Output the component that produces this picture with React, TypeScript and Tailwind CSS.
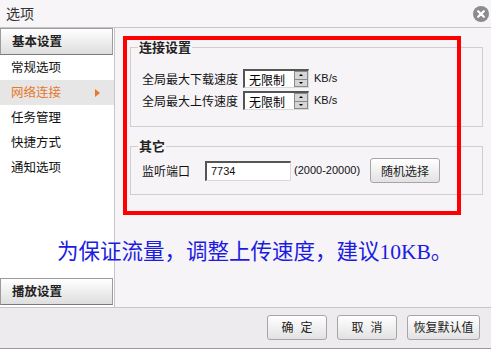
import React from 'react';

const cjk = { fontFamily: '"Noto Sans CJK SC", "Liberation Sans", sans-serif' };
const latin = { fontFamily: '"Liberation Sans", sans-serif' };

const SideItem: React.FC<{ label: string; active?: boolean }> = ({ label, active }) => (
  <div
    className={`h-[25px] flex items-center justify-between pl-[11px] pr-[14px] text-[12.5px] ${
      active ? 'bg-[#e6e6e6] text-[#e8772b]' : 'text-[#111]'
    }`}
  >
    <span>{label}</span>
    {active && (
      <span className="w-0 h-0 border-y-[4px] border-y-transparent border-l-[5px] border-l-[#e8772b]" />
    )}
  </div>
);

const SideHeader: React.FC<{ label: string }> = ({ label }) => (
  <div className="h-[27px] mr-[1px] flex items-center pl-[11px] text-[12.5px] font-bold text-[#222] border border-[#9c9c9c] border-b-[#7a7a7a] bg-gradient-to-b from-[#ffffff] to-[#dedede]">
    {label}
  </div>
);

const SpinBox: React.FC = () => (
  <div className="flex h-[19px] w-[66px] border-t-2 border-l-2 border-[#555] border-b border-r border-b-[#d8d8d8] border-r-[#d8d8d8] bg-white">
    <div className="flex-1 pl-[4px] text-[12px] leading-[17px] text-black">无限制</div>
    <div className="w-[14px] flex flex-col border border-[#8a8a8a] bg-[#d6d6d6]">
      <div className="flex-1 flex items-center justify-center border-b border-[#8a8a8a]">
        <span className="w-0 h-0 border-x-[2px] border-x-transparent border-b-[2px] border-b-black" />
      </div>
      <div className="flex-1 flex items-center justify-center">
        <span className="w-0 h-0 border-x-[2px] border-x-transparent border-t-[2px] border-t-black" />
      </div>
    </div>
  </div>
);

const Btn: React.FC<{ label: string[]; w: string }> = ({ label, w }) => (
  <div
    className={`${w} h-[25px] flex items-center justify-center gap-[7px] rounded-[3px] border border-[#a6a6a6] bg-gradient-to-b from-[#ffffff] to-[#e2e2e2] text-[12px] text-[#222]`}
  >
    {label.map((t) => (
      <span key={t}>{t}</span>
    ))}
  </div>
);

export default function App() {
  return (
    <div className="relative w-[491px] h-[349px] flex flex-col bg-[#f6f4f7] overflow-hidden" style={cjk}>
      {/* title bar */}
      <div className="h-[28px] flex items-center justify-between pl-[6px] pr-[2px] border-b border-[#c6c6c6] bg-[#f7f5f8]">
        <span className="text-[14px] text-[#333]">选项</span>
        <div className="w-[16px] h-[16px] rounded-full bg-[#8c8c8c] flex items-center justify-center">
          <svg width="8" height="8" viewBox="0 0 8 8">
            <path d="M1.2 1.2L6.8 6.8M6.8 1.2L1.2 6.8" stroke="#fff" strokeWidth="2.2" strokeLinecap="round" />
          </svg>
        </div>
      </div>

      {/* body */}
      <div className="flex flex-1 min-h-0">
        <div className="w-[115px] flex flex-col bg-white border-r border-[#c6c6c6]">
          <SideHeader label="基本设置" />
          <SideItem label="常规选项" />
          <SideItem label="网络连接" active />
          <SideItem label="任务管理" />
          <SideItem label="快捷方式" />
          <SideItem label="通知选项" />
          <div className="flex-1" />
          <div className="mb-[2px]">
            <SideHeader label="播放设置" />
          </div>
        </div>

        <div className="flex-1 pl-[15px] pr-[8px] pt-[11px]">
          <fieldset className="border border-[#cfcfcf] px-[11px] pb-[16px]">
            <legend className="ml-[-4px] px-[1px] text-[13px] font-bold leading-[16px] text-[#222]">连接设置</legend>
            <div className="mt-[14px] flex flex-col gap-[3px] text-[12px] text-[#111]">
              <div className="flex items-center">
                <span className="w-[101px]">全局最大下载速度</span>
                <SpinBox />
                <span className="ml-[5px] text-[11px]" style={latin}>KB/s</span>
              </div>
              <div className="flex items-center">
                <span className="w-[101px]">全局最大上传速度</span>
                <SpinBox />
                <span className="ml-[5px] text-[11px]" style={latin}>KB/s</span>
              </div>
            </div>
          </fieldset>

          <fieldset className="mt-[11px] border border-[#cfcfcf] px-[11px] pb-[11px]">
            <legend className="ml-[-4px] px-[1px] text-[13px] font-bold leading-[16px] text-[#222]">其它</legend>
            <div className="mt-[4px] flex items-center text-[12px] text-[#111]">
              <span className="w-[63px]">监听端口</span>
              <div
                className="w-[86px] h-[20px] pl-[4px] flex items-center border-t-2 border-l-2 border-[#555] border-b border-r border-b-[#d8d8d8] border-r-[#d8d8d8] bg-white text-[11px]"
                style={latin}
              >
                7734
              </div>
              <span className="ml-[3px] text-[11px]" style={latin}>(2000-20000)</span>
              <div className="ml-[10px]">
                <Btn label={['随机选择']} w="w-[70px]" />
              </div>
            </div>
          </fieldset>
        </div>
      </div>

      {/* footer */}
      <div className="h-[42px] flex items-center justify-end gap-[10px] pr-[11px] pb-[2px] border-t border-[#c6c6c6] border-b border-b-[#9a9a9a] bg-[#edebed]">
        <Btn label={['确', '定']} w="w-[60px]" />
        <Btn label={['取', '消']} w="w-[60px]" />
        <Btn label={['恢复默认值']} w="w-[73px]" />
      </div>

      {/* annotation overlay */}
      <div className="absolute left-[123px] top-[36px] w-[338px] h-[179px] border-[4px] border-[#ff0000] pointer-events-none" />
      <div
        className="absolute left-[57px] top-[238px] text-[21.5px] leading-[28px] text-[#1c1ce0] whitespace-nowrap"
        style={{ fontFamily: '"Liberation Serif", "Noto Sans CJK SC", serif' }}
      >
        为保证流量，调整上传速度，建议10KB。
      </div>
    </div>
  );
}
